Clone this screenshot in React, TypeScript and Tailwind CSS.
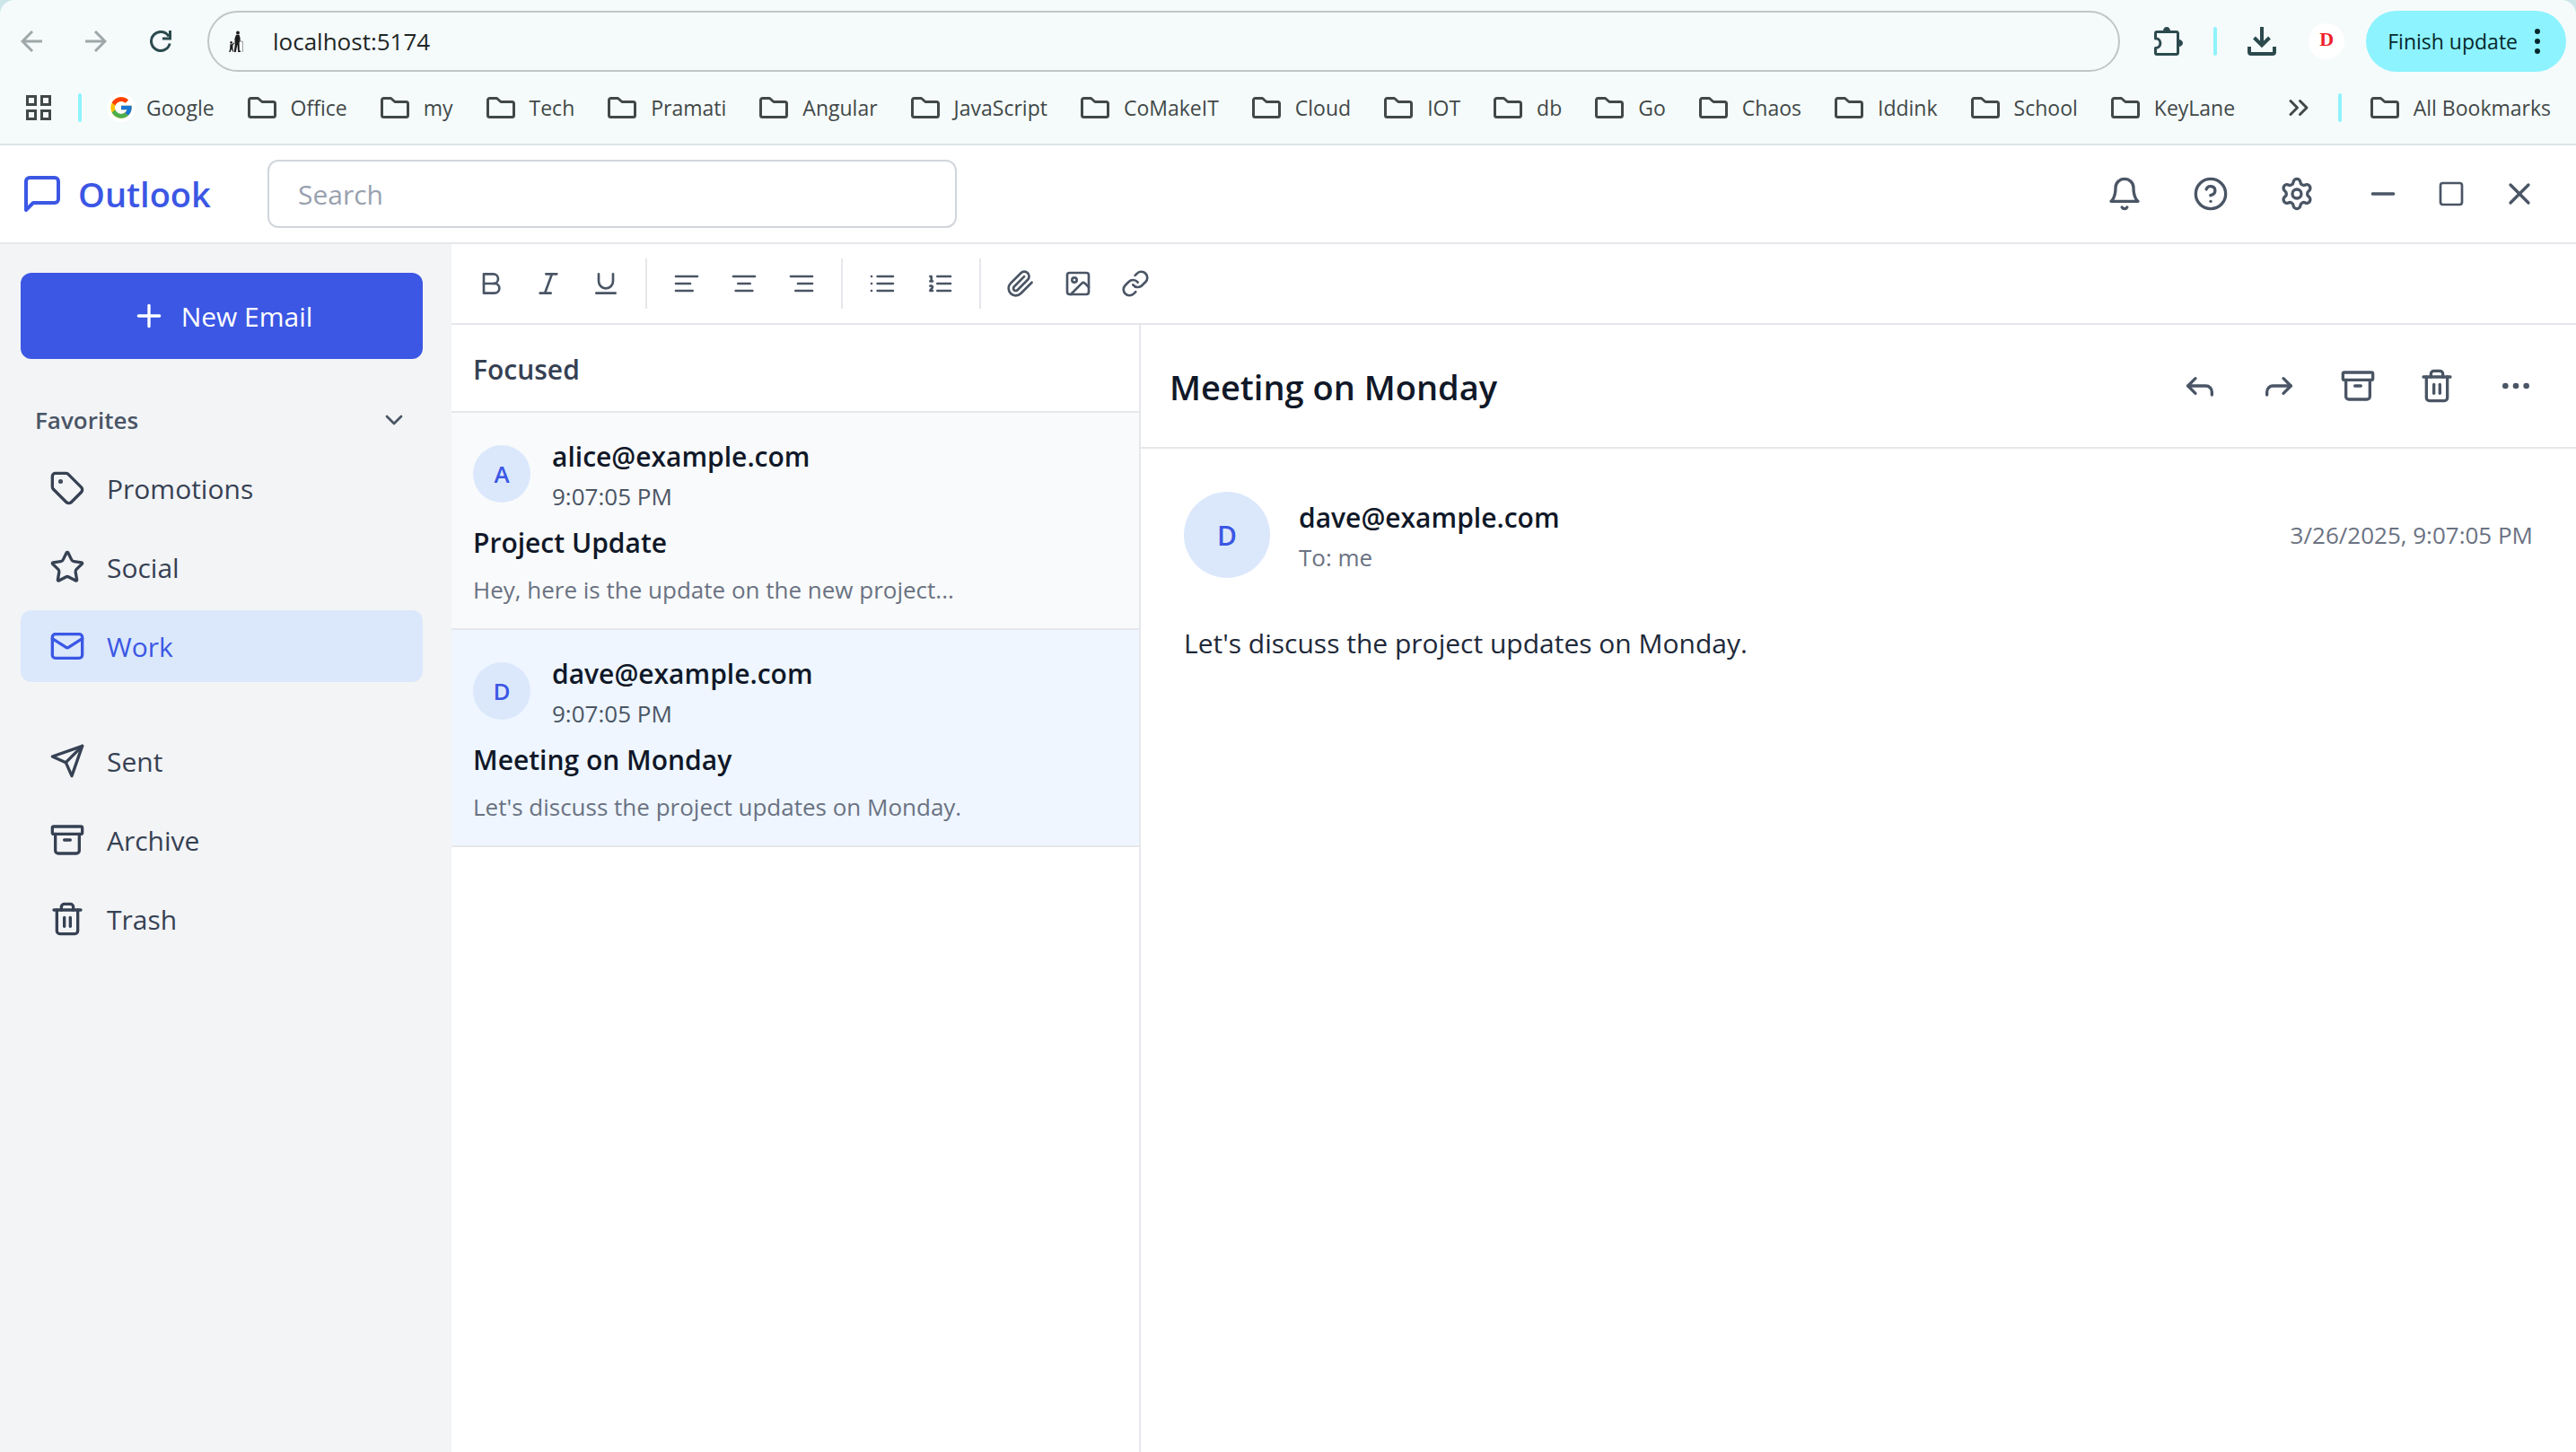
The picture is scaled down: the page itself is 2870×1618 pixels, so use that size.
import type { ReactNode } from 'react';
import {
  Archive,
  ChevronDown,
  ChevronsRight,
  Ellipsis,
  Forward,
  Image,
  Link,
  Mail,
  Minus,
  Plus,
  Reply,
  Settings,
  Square,
  Star,
  Tag,
  Trash2,
  X,
} from 'lucide-react';
import { FcGoogle } from 'react-icons/fc';

const bookmarks = [
  'Office', 'my', 'Tech', 'Pramati', 'Angular', 'JavaScript', 'CoMakeIT', 'Cloud',
  'IOT', 'db', 'Go', 'Chaos', 'Iddink', 'School', 'KeyLane',
];

const emails = [
  {
    from: 'alice@example.com',
    initial: 'A',
    time: '9:07:05 PM',
    subject: 'Project Update',
    preview: 'Hey, here is the update on the new project...',
    selected: false,
  },
  {
    from: 'dave@example.com',
    initial: 'D',
    time: '9:07:05 PM',
    subject: 'Meeting on Monday',
    preview: "Let's discuss the project updates on Monday.",
    selected: true,
  },
];

const favorites = [
  { label: 'Promotions', icon: Tag, active: false },
  { label: 'Social', icon: Star, active: false },
  { label: 'Work', icon: Mail, active: true },
];

const folders = [
  { label: 'Sent', icon: SendIcon, active: false },
  { label: 'Archive', icon: Archive, active: false },
  { label: 'Trash', icon: Trash2, active: false },
];

function Stroke({ className, children }: { className: string; children: ReactNode }) {
  return (
    <svg
      viewBox="0 0 24 24"
      fill="none"
      stroke="currentColor"
      strokeWidth="2"
      strokeLinecap="round"
      strokeLinejoin="round"
      className={className}
      aria-hidden="true"
    >
      {children}
    </svg>
  );
}

function SendIcon({ className = '' }: { className?: string }) {
  return (
    <Stroke className={className}>
      <path d="m22 2-7 20-4-9-9-4Z" />
      <path d="M22 2 11 13" />
    </Stroke>
  );
}

function FolderIcon() {
  return (
    <svg viewBox="0 0 32 24" fill="none" stroke="currentColor" strokeWidth="3" strokeLinejoin="round" className="h-6 w-8 shrink-0" aria-hidden="true">
      <path d="M3.5 1.5H11.5L16 5.5H28.5A2 2 0 0 1 30.5 7.5V20.5A2 2 0 0 1 28.5 22.5H3.5A2 2 0 0 1 1.5 20.5V3.5A2 2 0 0 1 3.5 1.5Z" />
    </svg>
  );
}

function Divider() {
  return <span className="h-8 w-1 shrink-0 rounded-full bg-[#8ff3fd]" />;
}

function BrowserBar() {
  return (
    <div className="bg-[#cde6e9]">
      <div className="rounded-t-2xl border-b-2 border-[#dbe5e7] bg-[#f5fbfb] pb-3">
        <div className="flex h-[92px] items-center pr-[11px] pl-[23px]">
          <div className="flex items-center gap-12">
            <button aria-label="Back" className="text-[#9fa8a8]">
              <svg viewBox="0 0 24 24" fill="none" stroke="currentColor" strokeWidth="3" className="size-6" aria-hidden="true">
                <path d="M24 12H2M13 1 2 12l11 11" />
              </svg>
            </button>
            <button aria-label="Forward" className="text-[#9fa8a8]">
              <svg viewBox="0 0 24 24" fill="none" stroke="currentColor" strokeWidth="3" className="size-6" aria-hidden="true">
                <path d="M0 12h22M11 1l11 11-11 11" />
              </svg>
            </button>
            <button aria-label="Reload" className="text-[#2c4a4e]">
              <svg viewBox="0 0 24 24" fill="none" stroke="currentColor" strokeWidth="3" className="size-6" aria-hidden="true">
                <path d="M22.2 14.5A10.5 10.5 0 1 1 21 6.5" />
                <path d="M22.5 0v9H14" />
              </svg>
            </button>
          </div>
          <div className="ml-10 flex h-[68px] flex-1 items-center gap-8 rounded-full border-2 border-[#bfc6c6] pr-8 pl-[21px]">
            <svg viewBox="0 0 18 24" className="h-6 w-[18px] shrink-0" fill="#1d1d1d" aria-hidden="true">
              <circle cx="11" cy="2.4" r="1.9" />
              <path d="M9 4.8 12.4 4.6 13.6 8v4.4l-1 .6.2 9.6h1.2V24h-2.8l-.8-8.400L8.8 24H6.6l1.2-8.600-.4-6.200Z" />
              <path d="M13 10.5 17 12.4V24h-.8V13L12.6 11.6Z" fill="#8a8a8a" />
              <circle cx="3.6" cy="13.4" r="1.3" />
              <path d="M2.4 15.2h2.4l2-2 .6.8-2 2.6v3l.8 4H5.2L4 20.6 2.6 24H1.2l1-4Z" />
            </svg>
            <input
              aria-label="Address"
              defaultValue="localhost:5174"
              className="w-full bg-transparent text-[26px] text-[#1f2626] outline-none"
            />
          </div>
          <div className="ml-[38px] flex items-center">
            <button aria-label="Extensions" className="text-[#2c4a4e]">
              <svg viewBox="0 0 32 32" fill="none" stroke="currentColor" strokeWidth="3" className="size-8" aria-hidden="true">
                <path d="M1.5 13V7A1.5 1.5 0 0 1 3 5.5H25A1.5 1.5 0 0 1 26.5 7V29A1.5 1.5 0 0 1 25 30.5H3A1.5 1.5 0 0 1 1.5 29V23.5A5.4 5.4 0 0 0 1.5 12.7Z" strokeLinejoin="round" />
                <path d="M10 4.5a4 4.5 0 0 1 8 0ZM27.5 14a4.5 4 0 0 1 0 8Z" fill="currentColor" stroke="none" />
              </svg>
            </button>
            <span className="mx-[34px] flex">
              <Divider />
            </span>
            <button aria-label="Downloads" className="text-[#2c4a4e]">
              <svg viewBox="0 0 32 32" fill="none" stroke="currentColor" strokeWidth="4" className="size-8" aria-hidden="true">
                <path d="M16 0v20" />
                <path d="m7.5 12 8.5 8.5 8.5-8.5" />
                <path d="M2 22v6a2 2 0 0 0 2 2h24a2 2 0 0 0 2-2v-6" />
              </svg>
            </button>
            <button aria-label="Profile" className="mx-6 ml-9 flex size-10 items-center justify-center rounded-full bg-white pb-1 font-['Liberation_Serif',serif] text-[22px] leading-none font-bold text-[#f0202b]">
              D
            </button>
            <button className="flex h-[68px] items-center gap-[18px] rounded-full bg-[#8df3fe] pr-7 pl-6 text-[23px] text-[#06282c]">
              Finish update
              <svg viewBox="0 0 8 28" fill="currentColor" className="h-7 w-2" aria-hidden="true">
                <circle cx="4" cy="3" r="3" />
                <circle cx="4" cy="14" r="3" />
                <circle cx="4" cy="25" r="3" />
              </svg>
            </button>
          </div>
        </div>

        <nav aria-label="Bookmarks" className="flex h-14 items-center pr-7 pl-[29px] text-[23px] whitespace-nowrap text-[#414848]">
          <button aria-label="Apps">
            <svg viewBox="0 0 28 28" fill="none" stroke="currentColor" strokeWidth="3" className="size-7" aria-hidden="true">
              <path d="M1.5 1.5h9v9h-9zM17.5 1.5h9v9h-9zM1.5 17.5h9v9h-9zM17.5 17.5h9v9h-9z" />
            </svg>
          </button>
          <span className="mr-7 ml-[30px] flex">
            <Divider />
          </span>
          <div className="flex items-center gap-[37px]">
            <a href="#google" className="flex items-center gap-3">
              <span className="flex size-8 items-center justify-center rounded-full bg-white">
                <FcGoogle className="size-7" />
              </span>
              Google
            </a>
            {bookmarks.map((name) => (
              <a key={name} href={`#${name}`} className="flex items-center gap-4">
                <FolderIcon />
                {name}
              </a>
            ))}
          </div>
          <div className="ml-auto flex items-center">
            <button aria-label="More bookmarks">
              <ChevronsRight className="size-9" strokeWidth={2} />
            </button>
            <span className="mr-8 ml-[26px] flex">
              <Divider />
            </span>
            <a href="#all" className="flex items-center gap-4">
              <FolderIcon />
              All Bookmarks
            </a>
          </div>
        </nav>
      </div>
    </div>
  );
}

function AppHeader() {
  return (
    <header className="flex h-[110px] items-center border-b-2 border-gray-200 bg-white pr-[43px] pl-[23px] text-gray-600">
      <div className="flex w-[275px] items-center gap-4 text-[#3b57e4]">
        <Stroke className="size-12">
          <path d="M21 15a2 2 0 0 1-2 2H7l-4 4V5a2 2 0 0 1 2-2h14a2 2 0 0 1 2 2z" />
        </Stroke>
        <h1 className="text-[38px] leading-[56px] font-semibold">Outlook</h1>
      </div>
      <input
        type="search"
        aria-label="Search"
        placeholder="Search"
        className="h-[76px] w-[768px] rounded-xl border-2 border-gray-300 px-8 text-[30px] text-gray-800 outline-none placeholder:text-gray-400"
      />
      <div className="ml-auto flex items-center gap-14">
        <button aria-label="Notifications">
          <Stroke className="size-10">
            <path d="M6 8a6 6 0 0 1 12 0c0 7 3 9 3 9H3s3-2 3-9" />
            <path d="M10.3 21a1.94 1.94 0 0 0 3.4 0" />
          </Stroke>
        </button>
        <button aria-label="Help">
          <Stroke className="size-10">
            <circle cx="12" cy="12" r="10" />
            <path d="M9.09 9a3 3 0 0 1 5.83 1c0 2-3 3-3 3" />
            <path d="M12 17h.01" />
          </Stroke>
        </button>
        <button aria-label="Settings">
          <Settings className="size-10" />
        </button>
        <div className="flex items-center gap-10">
          <button aria-label="Minimize">
            <Minus className="size-10" />
          </button>
          <button aria-label="Maximize">
            <Square className="size-8" />
          </button>
          <button aria-label="Close">
            <X className="size-10" />
          </button>
        </div>
      </div>
    </header>
  );
}

type NavEntry = { label: string; icon: typeof Tag | typeof SendIcon; active: boolean };

function NavList({ items }: { items: NavEntry[] }) {
  return (
    <ul className="flex flex-col gap-2">
      {items.map(({ label, icon: Icon, active }) => (
        <li key={label}>
          <button
            className={
              active
                ? 'flex h-20 w-full items-center gap-6 rounded-xl bg-[#dbe8fc] px-8 text-[30px] text-[#3b57e4]'
                : 'flex h-20 w-full items-center gap-6 rounded-xl px-8 text-[30px] text-gray-700'
            }
          >
            <Icon className="size-10" />
            {label}
          </button>
        </li>
      ))}
    </ul>
  );
}

function Sidebar() {
  return (
    <aside className="w-[503px] shrink-0 bg-gray-100 pt-8 pr-8 pl-[23px]">
      <button className="flex h-24 w-full items-center justify-center gap-4 rounded-xl bg-[#3b57e4] text-[30px] text-white">
        <Plus className="size-10" />
        New Email
      </button>
      <button className="mt-8 flex h-[72px] w-full items-center justify-between px-4 text-[26px] font-semibold text-gray-600">
        Favorites
        <ChevronDown className="size-8" />
      </button>
      <NavList items={favorites} />
      <div className="mt-12">
        <NavList items={folders} />
      </div>
    </aside>
  );
}

function Tool({ label, children }: { label: string; children: ReactNode }) {
  return (
    <button aria-label={label} className="size-8">
      {children}
    </button>
  );
}

function Toolbar() {
  return (
    <div role="toolbar" aria-label="Formatting" className="flex h-[90px] items-center border-b-2 border-gray-200 pl-7 text-gray-600">
      <div className="flex h-14 items-center gap-8 border-r-2 border-gray-200 pr-7">
        <Tool label="Bold">
          <Stroke className="size-8">
            <path d="M14 12a4 4 0 0 0 0-8H6v8" />
            <path d="M15 20a4 4 0 0 0 0-8H6v8Z" />
          </Stroke>
        </Tool>
        <Tool label="Italic">
          <Stroke className="size-8">
            <path d="M19 4h-9M14 20H5M15 4 9 20" />
          </Stroke>
        </Tool>
        <Tool label="Underline">
          <Stroke className="size-8">
            <path d="M6 4v6a6 6 0 0 0 12 0V4M4 20h16" />
          </Stroke>
        </Tool>
      </div>
      <div className="flex h-14 items-center gap-8 border-r-2 border-gray-200 px-7">
        <Tool label="Align left">
          <Stroke className="size-8">
            <path d="M21 6H3M15 12H3M17 18H3" />
          </Stroke>
        </Tool>
        <Tool label="Align center">
          <Stroke className="size-8">
            <path d="M21 6H3M17 12H7M19 18H5" />
          </Stroke>
        </Tool>
        <Tool label="Align right">
          <Stroke className="size-8">
            <path d="M21 6H3M21 12H9M21 18H7" />
          </Stroke>
        </Tool>
      </div>
      <div className="flex h-14 items-center gap-8 border-r-2 border-gray-200 px-7">
        <Tool label="Bulleted list">
          <Stroke className="size-8">
            <path d="M8 6h13M8 12h13M8 18h13M3 6h.01M3 12h.01M3 18h.01" />
          </Stroke>
        </Tool>
        <Tool label="Numbered list">
          <Stroke className="size-8">
            <path d="M10 6h11M10 12h11M10 18h11M4 6h1v4M4 10h2M6 18H4c0-1 2-2 2-3s-1-1.5-2-1" />
          </Stroke>
        </Tool>
      </div>
      <div className="flex h-14 items-center gap-8 px-7">
        <Tool label="Attach file">
          <Stroke className="size-8">
            <path d="m21.44 11.05-9.19 9.19a6 6 0 0 1-8.49-8.49l8.57-8.57A4 4 0 1 1 18 8.84l-8.59 8.57a2 2 0 0 1-2.83-2.83l8.49-8.48" />
          </Stroke>
        </Tool>
        <Tool label="Insert image">
          <Image className="size-8" />
        </Tool>
        <Tool label="Insert link">
          <Link className="size-8" />
        </Tool>
      </div>
    </div>
  );
}

function MessageList() {
  return (
    <section aria-label="Messages" className="w-[768px] shrink-0 border-r-2 border-gray-200">
      <h2 className="flex h-[98px] items-center border-b-2 border-gray-200 px-6 pt-0.5 text-[30px] font-semibold text-gray-700">Focused</h2>
      <ul>
        {emails.map((mail) => (
          <li
            key={mail.from}
            className={
              mail.selected
                ? 'border-b-2 border-gray-200 bg-[#eff6ff] p-6'
                : 'border-b-2 border-gray-200 bg-gray-50 p-6'
            }
          >
            <div className="mb-2 flex items-center gap-6">
              <span className="flex size-16 items-center justify-center rounded-full bg-[#dbe8fc] text-[26px] font-semibold text-[#3b57e4]">
                {mail.initial}
              </span>
              <div>
                <h3 className="text-[30px] leading-[50px] font-semibold text-gray-900">{mail.from}</h3>
                <p className="text-[26px] leading-[38px] text-gray-600">{mail.time}</p>
              </div>
            </div>
            <h4 className="mb-2 text-[30px] leading-[50px] font-semibold text-gray-900">{mail.subject}</h4>
            <p className="truncate text-[26px] leading-[38px] text-gray-500">{mail.preview}</p>
          </li>
        ))}
      </ul>
    </section>
  );
}

function MessageView() {
  return (
    <article className="min-w-0 flex-1">
      <div className="flex h-[138px] items-center justify-between border-b-2 border-gray-200 pr-[47px] pl-8">
        <h2 className="pt-0.5 text-[38px] leading-[56px] font-semibold text-gray-900">Meeting on Monday</h2>
        <div className="flex items-center gap-12 text-gray-600">
          <button aria-label="Reply">
            <Reply className="size-10" />
          </button>
          <button aria-label="Forward">
            <Forward className="size-10" />
          </button>
          <button aria-label="Archive">
            <Archive className="size-10" />
          </button>
          <button aria-label="Delete">
            <Trash2 className="size-10" />
          </button>
          <button aria-label="More actions">
            <Ellipsis className="size-10" />
          </button>
        </div>
      </div>
      <div className="p-12">
        <div className="mb-12 flex items-center gap-8">
          <span className="flex size-24 items-center justify-center rounded-full bg-[#dbe8fc] text-[30px] font-semibold text-[#3b57e4]">D</span>
          <div>
            <h3 className="text-[30px] leading-[50px] font-semibold text-gray-900">dave@example.com</h3>
            <p className="text-[26px] leading-[38px] text-gray-500">To: me</p>
          </div>
          <time className="ml-auto text-[26px] leading-[38px] text-gray-500">3/26/2025, 9:07:05 PM</time>
        </div>
        <p className="text-[30px] leading-[50px] text-gray-800">Let's discuss the project updates on Monday.</p>
      </div>
    </article>
  );
}

export default function App() {
  return (
    <div className="flex min-h-screen flex-col bg-white font-['Open_Sans','Noto_Sans',sans-serif]">
      <BrowserBar />
      <AppHeader />
      <div className="flex flex-1">
        <Sidebar />
        <main className="flex min-w-0 flex-1 flex-col">
          <Toolbar />
          <div className="flex flex-1">
            <MessageList />
            <MessageView />
          </div>
        </main>
      </div>
    </div>
  );
}
